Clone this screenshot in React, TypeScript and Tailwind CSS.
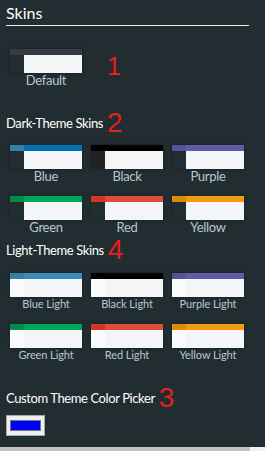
import React from "react";

type Skin = { name: string; topL: string; topR: string; botL: string; botR: string };

const dark: Skin[] = [
  { name: "Blue", topL: "bg-[#367fa9]", topR: "bg-[#0073b7]", botL: "bg-[#222d32]", botR: "bg-[#f4f5f7]" },
  { name: "Black", topL: "bg-[#000000]", topR: "bg-[#000000]", botL: "bg-[#222222]", botR: "bg-[#f4f5f7]" },
  { name: "Purple", topL: "bg-[#555299]", topR: "bg-[#605ca8]", botL: "bg-[#222d32]", botR: "bg-[#f4f5f7]" },
  { name: "Green", topL: "bg-[#008d4c]", topR: "bg-[#00a65a]", botL: "bg-[#222d32]", botR: "bg-[#f4f5f7]" },
  { name: "Red", topL: "bg-[#d33724]", topR: "bg-[#dd4b39]", botL: "bg-[#222d32]", botR: "bg-[#f4f5f7]" },
  { name: "Yellow", topL: "bg-[#db8b0b]", topR: "bg-[#f39c12]", botL: "bg-[#222d32]", botR: "bg-[#f4f5f7]" },
];

const light: Skin[] = [
  { name: "Blue Light", topL: "bg-[#367fa9]", topR: "bg-[#3c8dbc]", botL: "bg-[#f9fafc]", botR: "bg-[#f4f5f7]" },
  { name: "Black Light", topL: "bg-[#000000]", topR: "bg-[#000000]", botL: "bg-[#f9fafc]", botR: "bg-[#f4f5f7]" },
  { name: "Purple Light", topL: "bg-[#555299]", topR: "bg-[#605ca8]", botL: "bg-[#f9fafc]", botR: "bg-[#f4f5f7]" },
  { name: "Green Light", topL: "bg-[#008d4c]", topR: "bg-[#00a65a]", botL: "bg-[#f9fafc]", botR: "bg-[#f4f5f7]" },
  { name: "Red Light", topL: "bg-[#d33724]", topR: "bg-[#dd4b39]", botL: "bg-[#f9fafc]", botR: "bg-[#f4f5f7]" },
  { name: "Yellow Light", topL: "bg-[#db8b0b]", topR: "bg-[#f39c12]", botL: "bg-[#f9fafc]", botR: "bg-[#f4f5f7]" },
];

function Swatch({ skin }: { skin: Skin }) {
  return (
    <div className="w-[72px] shadow-[0_0_3px_rgba(0,0,0,0.4)]">
      <div className="flex h-[6px]">
        <span className={`w-[14px] ${skin.topL}`} />
        <span className={`flex-1 ${skin.topR}`} />
      </div>
      <div className="flex h-[18px]">
        <span className={`w-[14px] ${skin.botL}`} />
        <span className={`flex-1 ${skin.botR}`} />
      </div>
    </div>
  );
}

function SkinItem({ skin, small }: { skin: Skin; small?: boolean }) {
  return (
    <div className="w-[72px] flex flex-col items-center">
      <Swatch skin={skin} />
      <p
        className={`text-center text-[#b8c7ce] leading-[14px] whitespace-nowrap ${
          small ? "text-[11px] tracking-[-0.1px]" : "text-[13px] tracking-[-0.3px]"
        }`}
      >
        {skin.name}
      </p>
    </div>
  );
}

function Heading({ text, num }: { text: string; num: string }) {
  return (
    <div className="flex items-start">
      <h4 className="text-[13px] leading-[18px] tracking-[-0.4px] text-white">{text}</h4>
      {/* red annotation number */}
      <span className="relative top-[-5px] ml-[4px] h-[18px] font-['Liberation_Sans',sans-serif] text-[28px] leading-[28px] text-[#e3201f]">
        {num}
      </span>
    </div>
  );
}

export default function App() {
  return (
    <div className="relative w-[265px] h-[451px] overflow-hidden bg-[#222d32] font-['Lato','Noto_Sans',sans-serif]">
      <div className="w-[243px] ml-[6px]">
        {/* Skins title */}
        <h3 className="pt-[3px] text-[16px] leading-[20px] text-white">Skins</h3>
        <div className="mt-[2px] h-px bg-[#eeeeee]" />

        {/* Default */}
        <div className="mt-[23px] ml-[4px] flex items-start">
          <SkinItem
            skin={{ name: "Default", topL: "bg-[#373a42]", topR: "bg-[#373a42]", botL: "bg-[#222d32]", botR: "bg-[#f4f5f7]" }}
          />
          <span className="ml-[25px] mt-[5px] font-['Liberation_Sans',sans-serif] text-[25px] leading-[25px] text-[#e3201f]">
            1
          </span>
        </div>

        {/* Dark theme */}
        <div className="mt-[27px]">
          <Heading text="Dark-Theme Skins" num="2" />
        </div>
        <div className="mt-[13px] ml-[4px] grid grid-cols-[72px_72px_72px] gap-x-[9px] gap-y-[13px]">
          {dark.map((s) => (
            <SkinItem key={s.name} skin={s} />
          ))}
        </div>

        {/* Light theme */}
        <div className="mt-[7px]">
          <Heading text="Light-Theme Skins" num="4" />
        </div>
        <div className="mt-[14px] ml-[4px] grid grid-cols-[72px_72px_72px] gap-x-[9px] gap-y-[13px]">
          {light.map((s) => (
            <SkinItem key={s.name} skin={s} small />
          ))}
        </div>

        {/* Custom picker */}
        <div className="mt-[27px]">
          <Heading text="Custom Theme Color Picker" num="3" />
        </div>
        <button
          type="button"
          className="mt-[8px] flex h-[21px] w-[39px] items-center justify-center border border-[#a9a9a9] bg-[#efefef]"
        >
          <span className="block h-[11px] w-[31px] border border-[#777777] bg-[#0000ff]" />
        </button>
      </div>

      {/* bottom scrollbar */}
      <div className="absolute bottom-0 left-0 flex h-[4px] w-full">
        <span className="w-[250px] bg-[#c1c1c1]" />
        <span className="flex-1 bg-[#f1f1f1]" />
      </div>
    </div>
  );
}
